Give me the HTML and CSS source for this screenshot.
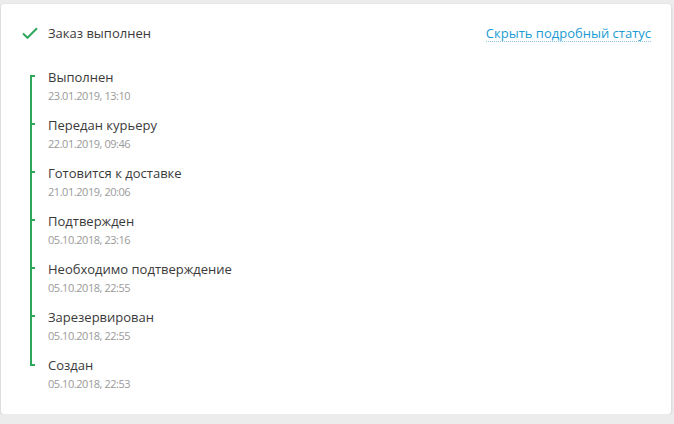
FILE: index.html
```html
<!DOCTYPE html>
<html lang="ru">
<head>
<meta charset="utf-8">
<link rel="stylesheet" href="styles.css">
</head>
<body>
<div class="card">
  <div class="header">
    <div class="status">
      <svg class="check" width="16" height="12" viewBox="0 0 16 12"><path d="M1 6.5 L5.5 10.8 L15 1.2" fill="none" stroke="#2fa85c" stroke-width="2"/></svg>
      <span class="status-text">Заказ выполнен</span>
    </div>
    <a class="toggle" href="#">Скрыть подробный статус</a>
  </div>
  <ul class="timeline">
    <li class="item"><div class="title">Выполнен</div><div class="date">23.01.2019, 13:10</div></li>
    <li class="item"><div class="title">Передан курьеру</div><div class="date">22.01.2019, 09:46</div></li>
    <li class="item"><div class="title">Готовится к доставке</div><div class="date">21.01.2019, 20:06</div></li>
    <li class="item"><div class="title">Подтвержден</div><div class="date">05.10.2018, 23:16</div></li>
    <li class="item"><div class="title">Необходимо подтверждение</div><div class="date">05.10.2018, 22:55</div></li>
    <li class="item"><div class="title">Зарезервирован</div><div class="date">05.10.2018, 22:55</div></li>
    <li class="item"><div class="title">Создан</div><div class="date">05.10.2018, 22:53</div></li>
  </ul>
</div>
</body>
</html>
```
FILE: styles.css
```css
html, body {
  margin: 0;
  padding: 0;
  background: #ececec;
  font-family: "Open Sans", "Noto Sans", sans-serif;
}
.card {
  box-sizing: border-box;
  width: 670px;
  height: 410px;
  margin: 4px 0 0 1px;
  background: #fff;
  border-radius: 3px;
  box-shadow: 0 1px 3px rgba(0,0,0,0.18);
  padding: 18px 20px 0 21px;
}
.header {
  display: flex;
  justify-content: space-between;
  align-items: center;
  height: 22px;
}
.status {
  display: flex;
  align-items: center;
  gap: 10px;
}
.check { display: block; }
.status-text {
  font-size: 13px;
  color: #3a3a3a;
}
.toggle {
  font-size: 13px;
  color: #1a9bd3;
  text-decoration: none;
  border-bottom: 1px dotted #8cc9e6;
  line-height: 16px;
}
.timeline {
  position: relative;
  list-style: none;
  margin: 24px 0 0 8px;
  padding: 0 0 0 18px;
}
.timeline::before {
  content: "";
  position: absolute;
  left: 0;
  top: 7px;
  bottom: 26px;
  width: 2px;
  background: #2fa85c;
}
.item {
  position: relative;
  margin-bottom: 12px;
}
.item:last-child { margin-bottom: 0; }
.item::before {
  content: "";
  position: absolute;
  left: -18px;
  top: 7px;
  width: 5px;
  height: 2px;
  background: #2fa85c;
}
.item:last-child::before { top: 8px; }
.title {
  font-size: 13px;
  line-height: 18px;
  color: #3a3a3a;
}
.date {
  margin-top: 2px;
  font-size: 11px;
  letter-spacing: -0.45px;
  line-height: 16px;
  color: #9a9a9a;
}
```
